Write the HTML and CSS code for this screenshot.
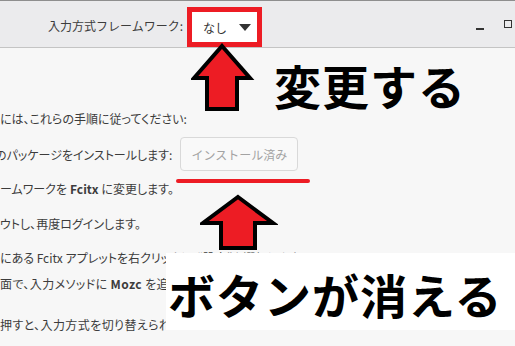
FILE: index.html
```html
<!DOCTYPE html>
<html lang="ja">
<head>
  <meta charset="UTF-8">
  <title>入力方式フレームワーク</title>
  <link rel="stylesheet" href="styles.css">
</head>
<body>

  <div class="titlebar">
    <span class="fw-label">入力方式フレームワーク:</span>
    <div class="dropdown">
      <span>なし</span>
      <span class="caret"></span>
    </div>
    <div class="win-controls">
      <span class="win-min"></span>
      <span class="win-max"></span>
    </div>
  </div>

  <div class="content">
    <div class="row row1">には、これらの手順に従ってください:</div>
    <div class="row row2">
      <span class="cut-no">のパッケージをインストールします:</span>
      <span class="btn">インストール済み</span>
    </div>
    <div class="row row3">ームワークを <b>Fcitx</b> に変更します。</div>
    <div class="row row4">ウトし、再度ログインします。</div>
    <div class="row row5">にある Fcitx アプレットを右クリックし、“設定”を選択します。</div>
    <div class="row row6 clipped">面で、入力メソッドに <b>Mozc</b> を追加します。</div>
    <div class="row row7 clipped">押すと、入力方式を切り替えられます。</div>

    <!-- annotations -->
    <svg class="arrow arrow-top" width="64" height="70" viewBox="0 0 64 70">
      <polygon points="31,3 59,35 46,35 46,66 16,66 16,35 3,35" fill="#ed1c24" stroke="#000" stroke-width="4" stroke-linejoin="miter"/>
    </svg>
    <svg class="arrow arrow-bottom" width="78" height="58" viewBox="0 0 78 58">
      <polygon points="38,3 73,29 55,29 55,54 21,54 21,29 3,29" fill="#ed1c24" stroke="#000" stroke-width="4" stroke-linejoin="miter"/>
    </svg>
    <div class="underline"></div>
    <div class="note note-change">変更する</div>
    <div class="note-box">ボタンが消える</div>
  </div>

</body>
</html>
```

FILE: styles.css
```css
* {
  box-sizing: border-box;
}

body {
  margin: 0;
  width: 515px;
  height: 346px;
  overflow: hidden;
  background: #f7f7f7;
  font-family: 'Noto Sans CJK JP', 'Noto Sans', sans-serif;
  font-size: 12px;
  color: #3c3c3c;
}

.titlebar {
  height: 48px;
  background: #ebebed;
  border-top: 1px solid #8e8e8e;
  border-bottom: 1px solid #c4c4c4;
  display: flex;
  align-items: center;
  padding-left: 48px;
  position: relative;
}

.fw-label {
  color: #3c3c3c;
  margin-right: 4px;
  margin-top: 2px;
}

.dropdown {
  width: 75px;
  height: 40px;
  margin-top: 6px;
  border: 5px solid #ed1c24;
  background: #fff;
  display: flex;
  align-items: center;
  padding-left: 11px;
  font-size: 12px;
  color: #333;
}

.caret {
  width: 0;
  height: 0;
  margin-left: 12px;
  border-left: 6px solid transparent;
  border-right: 6px solid transparent;
  border-top: 7px solid #333;
}

.win-controls {
  margin-left: auto;
  display: flex;
  align-items: center;
  gap: 20px;
  padding-right: 3px;
}

.win-min {
  width: 8px;
  height: 2px;
  margin-top: 10px;
  background: #333;
}

.win-max {
  width: 8px;
  height: 8px;
  border: 1.5px solid #333;
}

.content {
  position: relative;
  height: 298px;
  padding-top: 60px;
}

.row {
  display: flex;
  align-items: center;
  height: 20px;
  white-space: nowrap;
  font-feature-settings: "palt";
}

.row b {
  margin: 0 3px;
}

.row2 {
  height: 34px;
  margin-top: 9px;
}

.cut-no {
  margin-left: -5px;
}

.btn {
  margin-left: 8px;
  width: 118px;
  height: 34px;
  border: 1px solid #d9d9d9;
  border-radius: 4px;
  background: #f9f9f9;
  color: #a3a3a3;
  display: flex;
  align-items: center;
  justify-content: center;
  font-feature-settings: normal;
}

.row3 { margin-top: 7px; }
.row4 { margin-top: 15px; }
.row5 { margin-top: 14px; }
.row6 { margin-top: 6px; }
.row7 { margin-top: 21px; }

.clipped {
  width: 166px;
  overflow: hidden;
  letter-spacing: 0.4px;
}

.arrow {
  position: absolute;
}

.arrow-top {
  left: 191px;
  top: -5px;
}

.arrow-bottom {
  left: 200px;
  top: 146px;
}

.underline {
  position: absolute;
  left: 176px;
  top: 131px;
  width: 134px;
  height: 4px;
  border-radius: 2px;
  background: #ed1c24;
}

.note {
  position: absolute;
  font-size: 47px;
  font-weight: bold;
  color: #000;
  line-height: 1;
}

.note-change {
  left: 274px;
  top: 13px;
  letter-spacing: 1px;
}

.note-box {
  position: absolute;
  left: 166px;
  top: 205px;
  width: 349px;
  height: 77px;
  background: #fff;
  color: #000;
  font-size: 47px;
  font-weight: bold;
  line-height: 1;
  letter-spacing: 1px;
  padding-left: 2px;
  padding-top: 17px;
}
```
